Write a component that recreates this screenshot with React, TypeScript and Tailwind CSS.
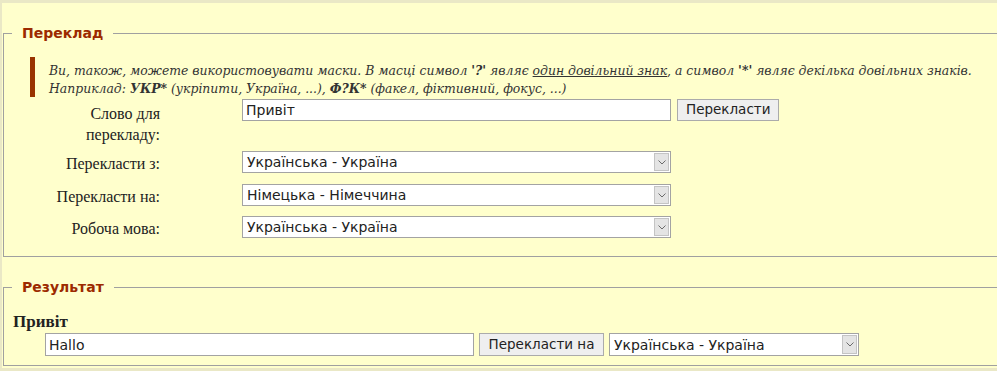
import React from "react";

const ctrlFont = { fontFamily: '"DejaVu Sans", Verdana, sans-serif' };

const Chevron = () => (
  <svg width="8" height="5" viewBox="0 0 8 5" fill="none">
    <path d="M0.5 0.5 L4 4 L7.5 0.5" stroke="#6b6b6b" strokeWidth="1" />
  </svg>
);

const FakeSelect: React.FC<{ value: string; className?: string }> = ({ value, className }) => (
  <div
    className={`flex items-stretch bg-white border border-[#a3a3a3] text-[14px] leading-none text-[#222] ${className ?? ""}`}
    style={ctrlFont}
  >
    <span className="flex-1 flex items-center pl-[4px] whitespace-nowrap">{value}</span>
    <span className="m-px w-[15px] flex items-center justify-center bg-[#e4e4e4] border border-[#c4c4c4]">
      <Chevron />
    </span>
  </div>
);

const Button: React.FC<{ children: React.ReactNode; className?: string }> = ({ children, className }) => (
  <button
    type="button"
    className={`bg-[#efefef] border border-[#ababab] text-[13.5px] leading-none text-[#222] px-[8px] whitespace-nowrap ${className ?? ""}`}
    style={ctrlFont}
  >
    {children}
  </button>
);

const TextBox: React.FC<{ value: string; className?: string }> = ({ value, className }) => (
  <div
    className={`bg-white border border-[#a3a3a3] text-[14px] leading-none text-[#222] pl-[3px] flex items-center ${className ?? ""}`}
    style={ctrlFont}
  >
    {value}
  </div>
);

const Legend: React.FC<{ children: React.ReactNode }> = ({ children }) => (
  <legend
    className="ml-[8px] px-[10px] text-[14px] leading-[18px] font-bold text-[#9c2a00]"
    style={{ fontFamily: '"DejaVu Sans", Verdana, sans-serif' }}
  >
    {children}
  </legend>
);

const labelCls = "text-right text-[16px] text-[#222] leading-[21px]";
const serif = { fontFamily: '"Liberation Serif", "Times New Roman", serif' };

export default function App() {
  return (
    <div className="min-h-[371px] bg-[#eae8c6] pt-[3px] pl-[2px] overflow-hidden">
      <div className="bg-[#ffffcc] w-[1010px] pt-[21px] pb-[2px]">
        <fieldset className="ml-px border border-[#a0a0a0]">
          <Legend>Переклад</Legend>

          <div
            className="ml-[26px] mt-[15px] border-l-[5px] border-[#993300] pl-[14px] pt-[4px] text-[13.8px] leading-[18px] italic font-stretch-condensed text-[#333] whitespace-nowrap"
            style={{ fontFamily: '"DejaVu Serif", Georgia, serif' }}
          >
            <div>
              Ви, також, можете використовувати маски. В масці символ <b>'?'</b> являє{" "}
              <span className="underline">один довільний знак</span>, а символ <b>'*'</b> являє декілька довільних знаків.
            </div>
            <div>
              Наприклад: <b>УКР*</b> (укріпити, Україна, ...), <b>Ф?К*</b> (факел, фіктивний, фокус, ...)
            </div>
          </div>

          <div className="mt-[2px] grid grid-cols-[156px_auto] gap-x-[82px] pb-[18px]" style={serif}>
            <div className={`${labelCls} pt-[4px] h-[52px]`}>
              Слово для
              <br />
              перекладу:
            </div>
            <div className="flex gap-[6px] items-start">
              <TextBox value="Привіт" className="w-[429px] h-[22px]" />
              <Button className="h-[22px] w-[102px]">Перекласти</Button>
            </div>

            <div className={`${labelCls} pt-[2px] h-[33px]`}>Перекласти з:</div>
            <div>
              <FakeSelect value="Українська - Україна" className="w-[429px] h-[22px]" />
            </div>

            <div className={`${labelCls} pt-[2px] h-[32px]`}>Перекласти на:</div>
            <div>
              <FakeSelect value="Німецька - Німеччина" className="w-[429px] h-[22px]" />
            </div>

            <div className={`${labelCls} pt-[2px] h-[22px]`}>Робоча мова:</div>
            <div>
              <FakeSelect value="Українська - Україна" className="w-[429px] h-[22px]" />
            </div>
          </div>
        </fieldset>

        <fieldset className="ml-px mt-[21px] border border-[#a0a0a0]">
          <Legend>Результат</Legend>
          <div className="pl-[9px] mt-[16px] text-[17px] leading-[20px] font-bold text-[#222]" style={serif}>
            Привіт
          </div>
          <div className="ml-[41px] mt-px flex gap-[5px] pb-[9px]">
            <TextBox value="Hallo" className="w-[429px] h-[23px]" />
            <Button className="h-[23px] w-[125px]">Перекласти на</Button>
            <FakeSelect value="Українська - Україна" className="w-[250px] h-[23px]" />
          </div>
        </fieldset>
      </div>
    </div>
  );
}
